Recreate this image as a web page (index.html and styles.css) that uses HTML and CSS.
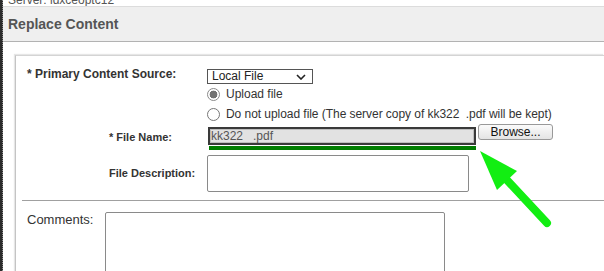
FILE: index.html
```html
<!DOCTYPE html>
<html>
<head>
<meta charset="utf-8">
<link rel="stylesheet" href="styles.css">
</head>
<body>
<div class="page">
  <div class="edge"></div>
  <div class="main">
    <div class="server"><span class="server-text">Server: ldxceoptc12</span></div>
    <div class="titlebar"><h1 class="title">Replace Content</h1></div>
    <div class="panel">
      <div class="row source-row">
        <div class="label main-label">* Primary Content Source:</div>
        <div class="controls">
          <div class="select">
            <span class="select-text">Local File</span>
            <svg class="chevron" width="10" height="6" viewBox="0 0 10 6"><path d="M1 1 L5 5 L9 1" fill="none" stroke="#222" stroke-width="1.6"/></svg>
          </div>
          <div class="radio-row"><span class="radio checked"></span><span>Upload file</span></div>
          <div class="radio-row"><span class="radio"></span><span class="long-text">Do not upload file (The server copy of kk322&nbsp;&nbsp;.pdf will be kept)</span></div>
        </div>
      </div>
      <div class="row file-row">
        <div class="label sub-label file-label">* File Name:</div>
        <div class="filebox">
          <div class="fileinput">kk322&nbsp;&nbsp;&nbsp;.pdf</div>
          <div class="greenbar"></div>
        </div>
        <div class="browse">Browse...</div>
      </div>
      <div class="row desc-row">
        <div class="label sub-label">File Description:</div>
        <div class="textbox desc-box"></div>
      </div>
      <div class="sep"></div>
      <div class="row comments-row">
        <div class="label plain-label">Comments:</div>
        <div class="textbox comments-box"></div>
      </div>
    </div>
  </div>
  <svg class="arrow" width="604" height="271" viewBox="0 0 604 271">
    <line x1="505" y1="178" x2="547" y2="223" stroke="#12ee12" stroke-width="8" stroke-linecap="round"/>
    <polygon points="480,151 517,171 497,190" fill="#12ee12"/>
  </svg>
</div>
</body>
</html>
```

FILE: styles.css
```css
html, body {
  margin: 0;
  padding: 0;
  background: #fff;
  overflow: hidden;
}
body {
  font-family: "Liberation Sans", Arial, sans-serif;
  color: #333;
  width: 604px;
  height: 271px;
}
.page {
  position: relative;
  display: flex;
  width: 604px;
  height: 271px;
  overflow: hidden;
}
.edge {
  width: 2px;
  background: #2b2b2b;
  border-right: 1px dotted #8c8c8c;
  flex: none;
}
.main {
  flex: 1;
  min-width: 0;
}
.server {
  height: 6px;
  overflow: hidden;
  padding-left: 5px;
}
.server-text {
  display: block;
  font-size: 12px;
  line-height: 14px;
  margin-top: -7px;
  color: #555;
}
.titlebar {
  height: 34px;
  background: #efefef;
  border-top: 1px solid #dcdcdc;
  border-bottom: 1px solid #b2b2b2;
  padding-left: 5px;
}
.title {
  margin: 0;
  font-size: 14px;
  line-height: 34px;
  font-weight: bold;
  color: #555;
}
.panel {
  margin-top: 13px;
  margin-left: 12px;
  border-top: 1px solid #d4d4d4;
  border-left: 1px solid #c4c4c4;
  box-shadow: -1px -1px 1px #e6e6e6;
  padding: 11px 0 0 6px;
  height: 300px;
}
.row {
  display: flex;
  margin-left: 5px;
}
.label {
  flex: none;
  box-sizing: border-box;
  color: #333;
}
.main-label {
  width: 180px;
  font-size: 12px;
  line-height: 14px;
  font-weight: bold;
}
.controls {
  display: flex;
  flex-direction: column;
}
.select {
  margin-top: 2px;
  width: 106px;
  height: 15px;
  box-sizing: border-box;
  border: 1px solid #555;
  display: flex;
  align-items: center;
  justify-content: space-between;
  padding: 0 6px 0 4px;
  font-size: 12px;
  color: #222;
}
.select-text {
  line-height: 13px;
}
.radio-row {
  height: 20px;
  display: flex;
  align-items: center;
  font-size: 12px;
  color: #333;
}
.long-text {
  letter-spacing: -0.05px;
}
.radio {
  width: 13px;
  height: 13px;
  box-sizing: border-box;
  border: 1px solid #777;
  border-radius: 50%;
  margin-right: 6px;
  flex: none;
  background: #fff;
}
.radio.checked {
  border-color: #8a8a8a;
  background: radial-gradient(circle, #727272 0 3.6px, #fff 4.2px);
}
.file-row {
  align-items: flex-start;
}
.sub-label {
  width: 180px;
  padding-left: 82px;
  font-size: 11px;
  font-weight: bold;
  line-height: 13px;
}
.file-label {
  width: 181px;
  margin-top: 7px;
}
.filebox {
  margin-top: 3px;
  display: flex;
  flex-direction: column;
}
.fileinput {
  width: 268px;
  height: 18px;
  box-sizing: border-box;
  border: 2px solid #3a3a3a;
  background: #e2e2e2;
  font-size: 12px;
  line-height: 14px;
  color: #555;
  padding-left: 1px;
  box-shadow: inset 0 0 0 1px #bdbdbd;
}
.greenbar {
  margin-top: 1px;
  margin-left: 1px;
  width: 267px;
  height: 4px;
  background: #007d00;
}
.browse {
  margin-left: 2px;
  width: 75px;
  height: 16px;
  box-sizing: border-box;
  border: 1px solid #999;
  border-radius: 3px;
  background: linear-gradient(#fbfbfb, #e4e4e4);
  font-size: 12px;
  line-height: 14px;
  text-align: center;
  color: #111;
}
.desc-row {
  margin-top: 5px;
  align-items: center;
}
.textbox {
  box-sizing: border-box;
  border: 1px solid #8a8a8a;
  border-radius: 2px;
  background: #fff;
}
.desc-box {
  width: 262px;
  height: 37px;
}
.sep {
  margin-top: 8px;
  height: 1px;
  background: #a0a0a0;
}
.comments-row {
  margin-top: 11px;
  align-items: flex-start;
}
.plain-label {
  width: 78px;
  font-size: 13px;
  line-height: 14px;
  margin-top: 1px;
}
.comments-box {
  width: 340px;
  height: 90px;
}
.arrow {
  position: absolute;
  left: 0;
  top: 0;
  pointer-events: none;
}
```
